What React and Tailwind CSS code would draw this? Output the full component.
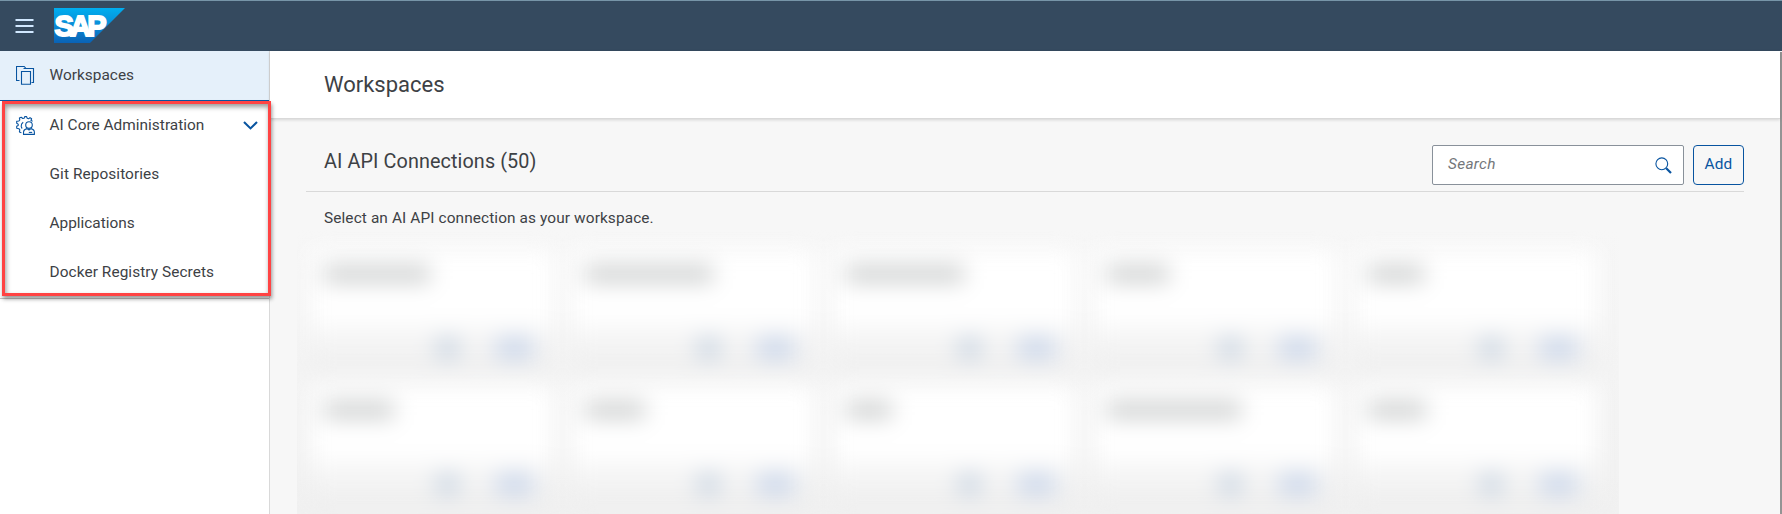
const NAV_CHILDREN = [
  { label: "Git Repositories", tracking: "tracking-[0.08px]" },
  { label: "Applications", tracking: "tracking-[0px]" },
  { label: "Docker Registry Secrets", tracking: "tracking-[0.08px]" },
];

// Widths of the obscured connection titles, row by row.
const CARDS = [106, 128, 118, 62, 56, 70, 60, 46, 134, 58];

function MenuIcon() {
  return (
    <svg className="h-[14px] w-[19px]" viewBox="0 0 19 14" fill="none" stroke="#d1e8ff" strokeWidth="2">
      <path d="M0.5 1H18.5M0.5 7H18.5M0.5 13H18.5" />
    </svg>
  );
}

function SapLogo() {
  return (
    <svg className="h-[35px] w-[71px]" viewBox="0 0 71 35">
      <defs>
        <linearGradient id="sap" x1="0" y1="0" x2="0" y2="1">
          <stop offset="0" stopColor="#00aeef" />
          <stop offset="0.5" stopColor="#0a8bd6" />
          <stop offset="1" stopColor="#0a62b5" />
        </linearGradient>
      </defs>
      <path d="M0 0H71L36 35H0Z" fill="url(#sap)" />
      <text
        x="0.4"
        y="28"
        fill="#fff"
        stroke="#fff"
        strokeWidth="1.8"
        fontFamily="Liberation Sans, sans-serif"
        fontWeight="700"
        fontSize="29"
        letterSpacing="-3.7"
      >
        SAP
      </text>
    </svg>
  );
}

function CopyIcon() {
  return (
    <svg className="h-[19px] w-[19px]" viewBox="0 0 19 19" fill="none" stroke="#0854a0" strokeWidth="1.1">
      <path d="M3.5 14.5H0.5V0.5H8.2L10 2.5" />
      <path d="M7.5 2.5H17.5V16.5H15.5" />
      <path d="M5.5 5.5H14.5V18.3H5.5Z" />
    </svg>
  );
}

function AdminIcon() {
  return (
    <svg className="h-[19px] w-[19px]" viewBox="0 0 19 19" fill="none" stroke="#0854a0" strokeWidth="1.1" strokeLinejoin="round">
      <path d="M5.4 16.8L3.4 15.9L3.8 13.8L2.9 12.7L0.7 12.3V10.2L2.2 9.4V8.1L0.7 7.2V5.3L2.9 5L3.8 3.9L3.4 2.1L5.2 1.2L6.8 2.5L8.1 2.3L8.7 0.6H10.6L11.2 2.3L12.6 2.8L14 1.6L15.6 2.8L15 4.5L16.6 5.2" />
      <path d="M7.2 6.2C5.8 7.2 5.1 8.5 5.2 10.2C5.3 11.2 5.7 12 6.2 12.5" />
      <circle cx="13" cy="9.1" r="3.3" />
      <path d="M7.5 18.4V16.4C7.5 14.2 9 13.1 11 12.6L13 14L15 12.6C17 13.1 18.4 14.2 18.4 16.4V18.4Z" />
      <path d="M12.8 16.4H16.2" />
    </svg>
  );
}

function ConnectionCard({ width }) {
  return (
    <div className="flex h-[119px] flex-col bg-white shadow-[0_0_3px_rgba(0,0,0,0.1)]">
      <div className="h-[75px] pt-[17px] pl-[14px]">
        <div className="h-[16px] bg-[#cbcdcd]" style={{ width }} />
      </div>
      <div className="flex h-[44px] items-start justify-end gap-[37px] border-b-2 border-[#e8e8e8] bg-linear-to-b from-[#f9f9f9] to-[#efefef] pt-[14px] pr-[21px]">
        <div className="h-[20px] w-[23px] bg-[#cbd6e3]" />
        <div className="h-[20px] w-[37px] bg-[#cbd7eb]" />
      </div>
    </div>
  );
}

export default function App() {
  return (
    <div className="flex h-[514px] w-[1782px] flex-col overflow-hidden bg-[#f7f7f7] font-['Roboto','Liberation_Sans',sans-serif] text-[#3d4145]">
      <header className="flex h-[51px] shrink-0 items-start border-t border-[#7795a8] bg-[#354a5f] pl-[15px]">
        <div className="pt-[18px]">
          <MenuIcon />
        </div>
        <div className="pt-[7px] pl-[20px]">
          <SapLogo />
        </div>
      </header>

      <div className="flex min-h-0 flex-1">
        <aside className="relative w-[270px] shrink-0 border-r border-[#d9d9d9] bg-white text-[15.4px]">
          <div className="flex h-[50px] items-center border-b border-[#0854a0] bg-[#e5f0fa] pl-4">
            <CopyIcon />
            <span className="pl-[14.5px] tracking-[0.02px]">Workspaces</span>
          </div>
          <div className="flex h-[49px] items-center pr-[11px] pb-px pl-4">
            <AdminIcon />
            <span className="flex-1 pt-px pl-[14.5px] tracking-[0.02px]">AI Core Administration</span>
            <svg className="h-[9px] w-[15px]" viewBox="0 0 15 9" fill="none" stroke="#0854a0" strokeWidth="2.1">
              <path d="M1 1L7.5 7.4L14 1" />
            </svg>
          </div>
          {NAV_CHILDREN.map((c) => (
            <div key={c.label} className={`flex h-[49px] items-center pl-[49.5px] ${c.tracking}`}>
              {c.label}
            </div>
          ))}
          <div className="border-b border-[#c4c4c4] pt-px" />
          <div className="absolute top-[50px] left-[2px] z-10 h-[195px] w-[269px] border-[3px] border-[#ff4343] shadow-[1px_3px_4px_rgba(0,0,0,0.4),inset_1px_3px_5px_rgba(0,0,0,0.4)]" />
        </aside>

        <main className="flex min-w-0 flex-1 flex-col">
          <div className="z-[1] flex h-[68px] shrink-0 items-center border-b border-[#d9d9d9] bg-white pb-[1px] pl-[54px] text-[22px] shadow-[0_1px_3px_rgba(0,0,0,0.14)]">
            Workspaces
          </div>
          <div className="mr-[36px] ml-[36px] flex h-[73px] shrink-0 items-start border-b border-[#d9d9d9] pl-[18px]">
            <h2 className="flex-1 pt-[29px] text-[19.8px] leading-[28px] tracking-[0.1px]">AI API Connections (50)</h2>
            <div className="mt-[26px] flex h-[40px] w-[252px] items-center justify-between rounded-[2px] border border-[#89919a] bg-white pr-[11px] pl-[15px]">
              <span className="text-[15.4px] tracking-[0.3px] text-[#74777a] italic">Search</span>
              <svg className="h-[17px] w-[17px]" viewBox="0 0 17 17" fill="none" stroke="#0854a0">
                <circle cx="6.8" cy="6.8" r="5.9" strokeWidth="1.1" />
                <path d="M11.2 11.2L16 16" strokeWidth="2.2" />
              </svg>
            </div>
            <button className="mt-[26px] ml-[9px] h-[40px] w-[51px] rounded-[4px] border border-[#0854a0] text-[15.4px] tracking-[0.2px] text-[#0854a0]">
              Add
            </button>
          </div>
          <p className="shrink-0 pt-[14px] pl-[54px] text-[15.4px] leading-[24px] tracking-[0.11px]">
            Select an AI API connection as your workspace.
          </p>
          <div className="ml-[27px] min-h-0 w-[1322px] flex-1 overflow-hidden bg-linear-to-b from-[#f7f7f7] to-[#f1f1f1]">
            <div className="grid grid-cols-[repeat(5,244px)] gap-x-[17px] gap-y-[17px] pt-[19px] pl-[13px] blur-[11px]">
              {CARDS.map((width, i) => (
                <ConnectionCard key={i} width={width} />
              ))}
            </div>
          </div>
        </main>
        <div className="mt-px w-[2px] shrink-0 bg-[#949494]" />
      </div>
    </div>
  );
}
